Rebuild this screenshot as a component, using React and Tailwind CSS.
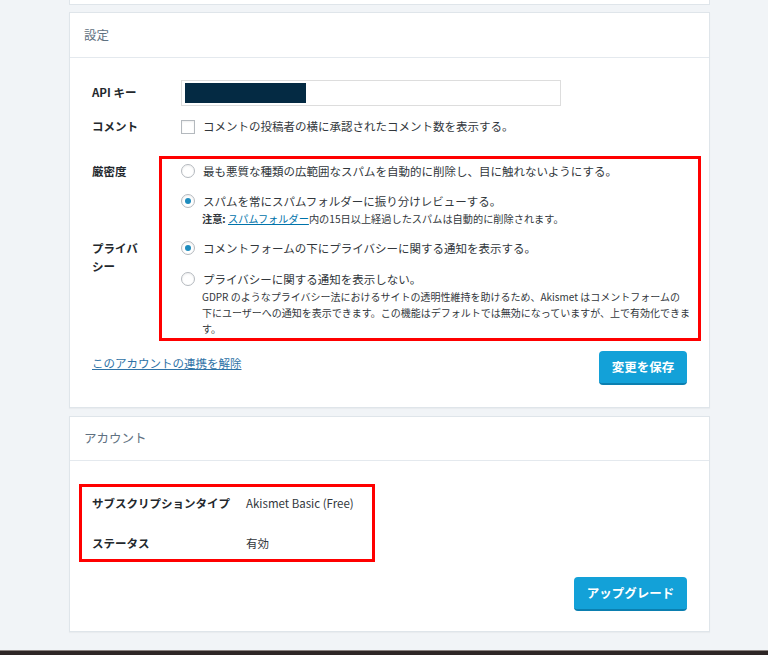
import React from "react";

const jp = "font-['Noto_Sans_CJK_JP','Noto_Sans',sans-serif]";

const Radio = ({ checked }) => (
    <span className="mt-[2px] flex h-[14px] w-[14px] shrink-0 items-center justify-center rounded-full border border-[#b4b9be] bg-white shadow-[inset_0_1px_2px_rgba(0,0,0,0.07)]">
        {checked && <span className="h-[6px] w-[6px] rounded-full bg-[#1e8cbe]" />}
    </span>
);

const RadioRow = ({ checked, children }) => (
    <div className="flex items-start gap-[8px] text-[11.5px] leading-[18px] text-[#32373c]">
        <Radio checked={checked} />
        <span>{children}</span>
    </div>
);

const Card = ({ title, headerH, children }) => (
    <div className="w-[641px] border border-[#dfe5ea] bg-white shadow-[0_1px_1px_rgba(0,0,0,0.03)]">
        <div className={`flex items-center border-b border-[#e4e9ee] px-[14px] ${headerH}`}>
            <h2 className="text-[12.5px] font-normal text-[#5f7181]">{title}</h2>
        </div>
        {children}
    </div>
);

const BlueButton = ({ children, w }) => (
    <button
        className={`h-[34px] ${w} rounded-[4px] border-b-2 border-[#0b7fb0] bg-[#13a1d8] text-[12.5px] font-bold text-white`}
    >
        {children}
    </button>
);

export default function App() {
    return (
        <div className={`flex h-[655px] flex-col overflow-hidden bg-[#f1f4f7] ${jp}`}>
            {/* tail of the card above */}
            <div className="ml-[69px] h-[5px] w-[641px] border-x border-b border-[#dfe5ea] bg-white" />

            <div className="ml-[69px] mt-[7px]">
                <Card title="設定" headerH="h-[45px]">
                    <div className="px-[22px] pb-[22px] pt-[22px]">
                        <div className="flex h-[26px] items-center">
                            <div className="w-[89px] text-[11.5px] font-bold text-[#23282d]">API キー</div>
                            <div className="flex h-[26px] w-[380px] items-center border border-[#dddddd] bg-white px-[3px]">
                                <div className="h-[20px] w-[121px] bg-[#042a43]" />
                            </div>
                        </div>

                        <div className="mt-[8px] flex h-[26px] items-center">
                            <div className="w-[89px] text-[11.5px] font-bold text-[#23282d]">コメント</div>
                            <span className="h-[14px] w-[14px] border border-[#b4b9be] bg-white shadow-[inset_0_1px_2px_rgba(0,0,0,0.07)]" />
                            <span className="ml-[8px] text-[11.5px] text-[#32373c]">
                                コメントの投稿者の横に承認されたコメント数を表示する。
                            </span>
                        </div>

                        <div className="relative mt-[16px] pb-[4px] pt-[6px]">
                            <div className="pointer-events-none absolute bottom-0 left-[67px] right-[-14px] top-0 border-[3px] border-[#ff0000]" />

                            <div className="flex">
                                <div className="w-[89px] shrink-0 text-[11.5px] font-bold leading-[18px] text-[#23282d]">厳密度</div>
                                <div>
                                    <RadioRow>最も悪質な種類の広範囲なスパムを自動的に削除し、目に触れないようにする。</RadioRow>
                                    <div className="mt-[12px]">
                                        <RadioRow checked>スパムを常にスパムフォルダーに振り分けレビューする。</RadioRow>
                                    </div>
                                    <p className="ml-[21px] mt-[1px] text-[10.2px] leading-[16px] text-[#32373c]">
                                        <b>注意:</b>{" "}
                                        <a className="text-[#0073aa] underline">スパムフォルダー</a>
                                        内の15日以上経過したスパムは自動的に削除されます。
                                    </p>
                                </div>
                            </div>

                            <div className="mt-[12px] flex">
                                <div className="w-[89px] shrink-0">
                                    <div className="w-[55px] text-[11.5px] font-bold leading-[18px] text-[#23282d]">プライバシー</div>
                                </div>
                                <div>
                                    <RadioRow checked>コメントフォームの下にプライバシーに関する通知を表示する。</RadioRow>
                                    <div className="mt-[13px]">
                                        <RadioRow>プライバシーに関する通知を表示しない。</RadioRow>
                                    </div>
                                    <p className="ml-[21px] mt-[1px] w-[490px] text-[10px] leading-[16px] text-[#32373c]">
                                        GDPR のようなプライバシー法におけるサイトの透明性維持を助けるため、Akismet はコメントフォームの
                                        <br />
                                        下にユーザーへの通知を表示できます。この機能はデフォルトでは無効になっていますが、上で有効化できます。
                                    </p>
                                </div>
                            </div>
                        </div>

                        <div className="mt-[10px] flex items-start justify-between">
                            <a className="mt-[4px] text-[11.5px] leading-[16px] text-[#2e72a6] underline">このアカウントの連携を解除</a>
                            <BlueButton w="w-[88px]">変更を保存</BlueButton>
                        </div>
                    </div>
                </Card>
            </div>

            <div className="ml-[69px] mt-[8px]">
                <Card title="アカウント" headerH="h-[44px]">
                    <div className="pb-[20px] pl-[9px] pr-[22px] pt-[23px]">
                        <div className="w-[296px] border-[3px] border-[#ff0000] pb-[7px] pl-[10px] pt-[7px] text-[11.5px] leading-[18px]">
                            <div className="flex">
                                <div className="w-[154px] font-bold text-[#23282d]">サブスクリプションタイプ</div>
                                <div className="text-[#32373c]">Akismet Basic (Free)</div>
                            </div>
                            <div className="mt-[22px] flex">
                                <div className="w-[154px] font-bold text-[#23282d]">ステータス</div>
                                <div className="text-[#32373c]">有効</div>
                            </div>
                        </div>
                        <div className="mt-[15px] flex justify-end">
                            <BlueButton w="w-[113px]">アップグレード</BlueButton>
                        </div>
                    </div>
                </Card>
            </div>

            <div className="mt-auto h-[5px] border-t border-[#8a8280] bg-[#2e2626]" />
        </div>
    );
}
